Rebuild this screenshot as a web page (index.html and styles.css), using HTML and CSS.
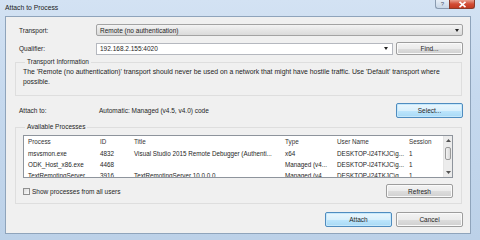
FILE: index.html
```html
<!DOCTYPE html>
<html>
<head>
<meta charset="utf-8">
<link rel="stylesheet" href="styles.css">
</head>
<body>
<div class="window">
  <div class="titlebar">
    <span class="title">Attach to Process</span>
    <div class="caption">
      <span class="cap-help">?</span>
      <span class="cap-close"><svg width="9" height="7" viewBox="0 0 9 7"><path d="M1.5 0.8 L7.5 6.2 M7.5 0.8 L1.5 6.2" stroke="#fff" stroke-width="1.6"/></svg></span>
    </div>
  </div>
  <div class="client">
    <div class="row row-transport">
      <span class="lbl">Transport:</span>
      <div class="combo"><span>Remote (no authentication)</span><span class="arrow"></span></div>
    </div>
    <div class="row row-qual">
      <span class="lbl">Qualifier:</span>
      <div class="input"><span>192.168.2.155:4020</span><span class="arrow"></span></div>
      <button class="btn">Find...</button>
    </div>
    <fieldset class="group group-info">
      <legend>Transport Information</legend>
      <p class="info">The 'Remote (no authentication)' transport should never be used on a network that might have hostile traffic. Use 'Default' transport where possible.</p>
    </fieldset>
    <div class="row row-attach">
      <span class="lbl">Attach to:</span>
      <span class="attach-val">Automatic: Managed (v4.5, v4.0) code</span>
      <button class="btn btn-default">Select...</button>
    </div>
    <fieldset class="group group-procs">
      <legend>Available Processes</legend>
      <div class="list">
        <div class="list-body">
          <div class="lrow lhead">
            <span class="c1">Process</span><span class="c2">ID</span><span class="c3">Title</span><span class="c4">Type</span><span class="c5">User Name</span><span class="c6">Session</span>
          </div>
          <div class="lrow">
            <span class="c1">msvsmon.exe</span><span class="c2">4832</span><span class="c3">Visual Studio 2015 Remote Debugger (Authenti...</span><span class="c4">x64</span><span class="c5">DESKTOP-I24TKJC\g...</span><span class="c6">1</span>
          </div>
          <div class="lrow">
            <span class="c1">ODK_Host_x86.exe</span><span class="c2">4468</span><span class="c3"></span><span class="c4">Managed (v4...</span><span class="c5">DESKTOP-I24TKJC\g...</span><span class="c6">1</span>
          </div>
          <div class="lrow">
            <span class="c1">TextRemotingServer...</span><span class="c2">3916</span><span class="c3">TextRemotingServer 10.0.0.0</span><span class="c4">Managed (v4...</span><span class="c5">DESKTOP-I24TKJC\g...</span><span class="c6">1</span>
          </div>
        </div>
        <div class="vscroll">
          <span class="sb-btn"><svg width="5" height="3" viewBox="0 0 5 3"><path d="M0 3 L2.5 0 L5 3Z" fill="#555"/></svg></span>
          <span class="sb-track"><span class="sb-thumb"></span></span>
          <span class="sb-btn"><svg width="5" height="3" viewBox="0 0 5 3"><path d="M0 0 L2.5 3 L5 0Z" fill="#555"/></svg></span>
        </div>
      </div>
      <div class="list-foot">
        <label class="chk"><span class="box"></span><span>Show processes from all users</span></label>
        <button class="btn btn-refresh">Refresh</button>
      </div>
    </fieldset>
    <div class="dlg-btns">
      <button class="btn btn-default">Attach</button>
      <button class="btn">Cancel</button>
    </div>
  </div>
</div>
</body>
</html>
```
FILE: styles.css
```css
* { box-sizing: border-box; }
html, body { margin: 0; padding: 0; }
body {
  width: 480px;
  height: 240px;
  overflow: hidden;
  font-family: "Liberation Sans", Arial, sans-serif;
  font-size: 6.5px;
  color: #1e1e1e;
}
.window {
  width: 480px;
  height: 240px;
  display: flex;
  flex-direction: column;
  background: linear-gradient(180deg, #d3e2f3 0%, #c6d9ee 40%, #bcd1e8 100%);
}
.titlebar {
  height: 16px;
  display: flex;
  align-items: flex-start;
  padding-left: 5px;
}
.title {
  font-size: 6.8px;
  line-height: 16px;
  color: #222;
}
.caption {
  margin-left: auto;
  margin-right: 5px;
  display: flex;
}
.cap-help {
  width: 14px;
  height: 9px;
  border: 1px solid #8a9bb0;
  border-top: none;
  border-right: none;
  border-radius: 0 0 0 3px;
  background: linear-gradient(#e6eef7, #c8d6e6);
  font-size: 6px;
  line-height: 8px;
  text-align: center;
  color: #4a5a70;
}
.cap-close {
  width: 26px;
  height: 9px;
  border: 1px solid #8a3a2a;
  border-top: none;
  border-radius: 0 0 3px 0;
  background: linear-gradient(#e8a090, #d24c35 50%, #c33a22);
  display: flex;
  align-items: center;
  justify-content: center;
}
.client {
  flex: 1;
  margin: 0 9px 6px 5px;
  border: 1px solid #8fa4bb;
  background: #f0f0f0;
  padding: 0 7px 0 9px;
  display: flex;
  flex-direction: column;
}
.row {
  display: flex;
  align-items: center;
  padding-left: 4px;
}
.lbl {
  width: 77px;
  flex: none;
}
.row-transport { margin-top: 7px; height: 12px; }
.row-qual { margin-top: 6px; height: 13px; }
.combo {
  flex: 1;
  height: 12px;
  border: 1px solid #a3a3a3;
  border-radius: 2px;
  background: linear-gradient(#f4f4f4, #e6e6e6 50%, #dadada);
  display: flex;
  align-items: center;
  padding-left: 3px;
  padding-right: 3px;
}
.combo span:first-child, .input span:first-child { flex: 1; }
.arrow {
  width: 0;
  height: 0;
  border-left: 2.5px solid transparent;
  border-right: 2.5px solid transparent;
  border-top: 3px solid #222;
}
.input {
  flex: 1;
  height: 12px;
  border: 1px solid #b5b8bf;
  background: #fff;
  display: flex;
  align-items: center;
  padding-left: 3px;
  padding-right: 4px;
}
.btn {
  font: inherit;
  color: #1e1e1e;
  width: 67px;
  height: 13px;
  padding: 0;
  margin-left: 3px;
  border: 1px solid #9d9d9d;
  border-radius: 2px;
  background: linear-gradient(#f3f3f3, #ebebeb 50%, #dddddd 51%, #d0d0d0);
  box-shadow: inset 0 0 0 1px #fafafa;
  flex: none;
}
.btn-default {
  border-color: #4f8cbf;
  background: linear-gradient(#eaf6fd, #d9f0fc 50%, #bee6fd 51%, #a7d9f5);
  box-shadow: inset 0 0 0 1px #c6e8fb;
}
.group {
  margin: 0;
  border: 1px solid #dedede;
  padding: 0 8px 8px 7px;
  margin-right: 1px;
}
.group legend {
  padding: 0 2px;
  margin-left: 2px;
  line-height: 10px;
}
.group-info { margin-top: 2px; padding-bottom: 8px; }
.info {
  margin: 0;
  padding-left: 0;
  font-size: 6.85px;
  line-height: 10px;
}
.row-attach { margin-top: 7px; height: 15px; }
.attach-val { flex: 1; padding-left: 3px; }
.row-attach .btn { height: 15px; }
.group-procs { margin-top: 4px; padding-top: 3px; padding-bottom: 5px; }
.list {
  height: 43px;
  border: 1px solid #8e949c;
  background: #fff;
  display: flex;
  overflow: hidden;
}
.list-body {
  flex: 1;
  overflow: hidden;
}
.lrow {
  display: flex;
  height: 11px;
  line-height: 11px;
  white-space: nowrap;
  font-size: 6.3px;
}
.lhead {
  height: 12px;
  line-height: 12px;
  color: #333;
}
.lrow span { padding-left: 4px; overflow: hidden; flex: none; }
.c1 { width: 72px; }
.c2 { width: 34px; }
.c3 { width: 151px; }
.c4 { width: 52px; }
.c5 { width: 72px; }
.c6 { width: 38px; }
.vscroll {
  width: 9px;
  flex: none;
  display: flex;
  flex-direction: column;
  background: #ececec;
  border-left: 1px solid #e4e4e4;
}
.sb-btn {
  height: 9px;
  display: flex;
  align-items: center;
  justify-content: center;
  flex: none;
}
.sb-track {
  flex: 1;
  padding: 2px 1px 2px 1px;
  display: flex;
}
.sb-thumb {
  flex: none;
  width: 100%;
  height: 13px;
  border: 1px solid #9a9a9a;
  border-radius: 2px;
  background: linear-gradient(90deg, #f3f3f3, #d9d9d9);
}
.list-foot {
  margin-top: 6px;
  display: flex;
  align-items: center;
  height: 14px;
}
.chk {
  display: flex;
  align-items: center;
  gap: 2px;
  flex: 1;
}
.box {
  width: 7px;
  height: 7px;
  border: 1px solid #8f8f8f;
  background: linear-gradient(135deg, #dcdcdc, #fbfbfb);
}
.btn-refresh { height: 14px; }
.dlg-btns {
  margin-top: 8px;
  display: flex;
  justify-content: flex-end;
  gap: 1px;
}
.dlg-btns .btn { height: 15px; }
```
